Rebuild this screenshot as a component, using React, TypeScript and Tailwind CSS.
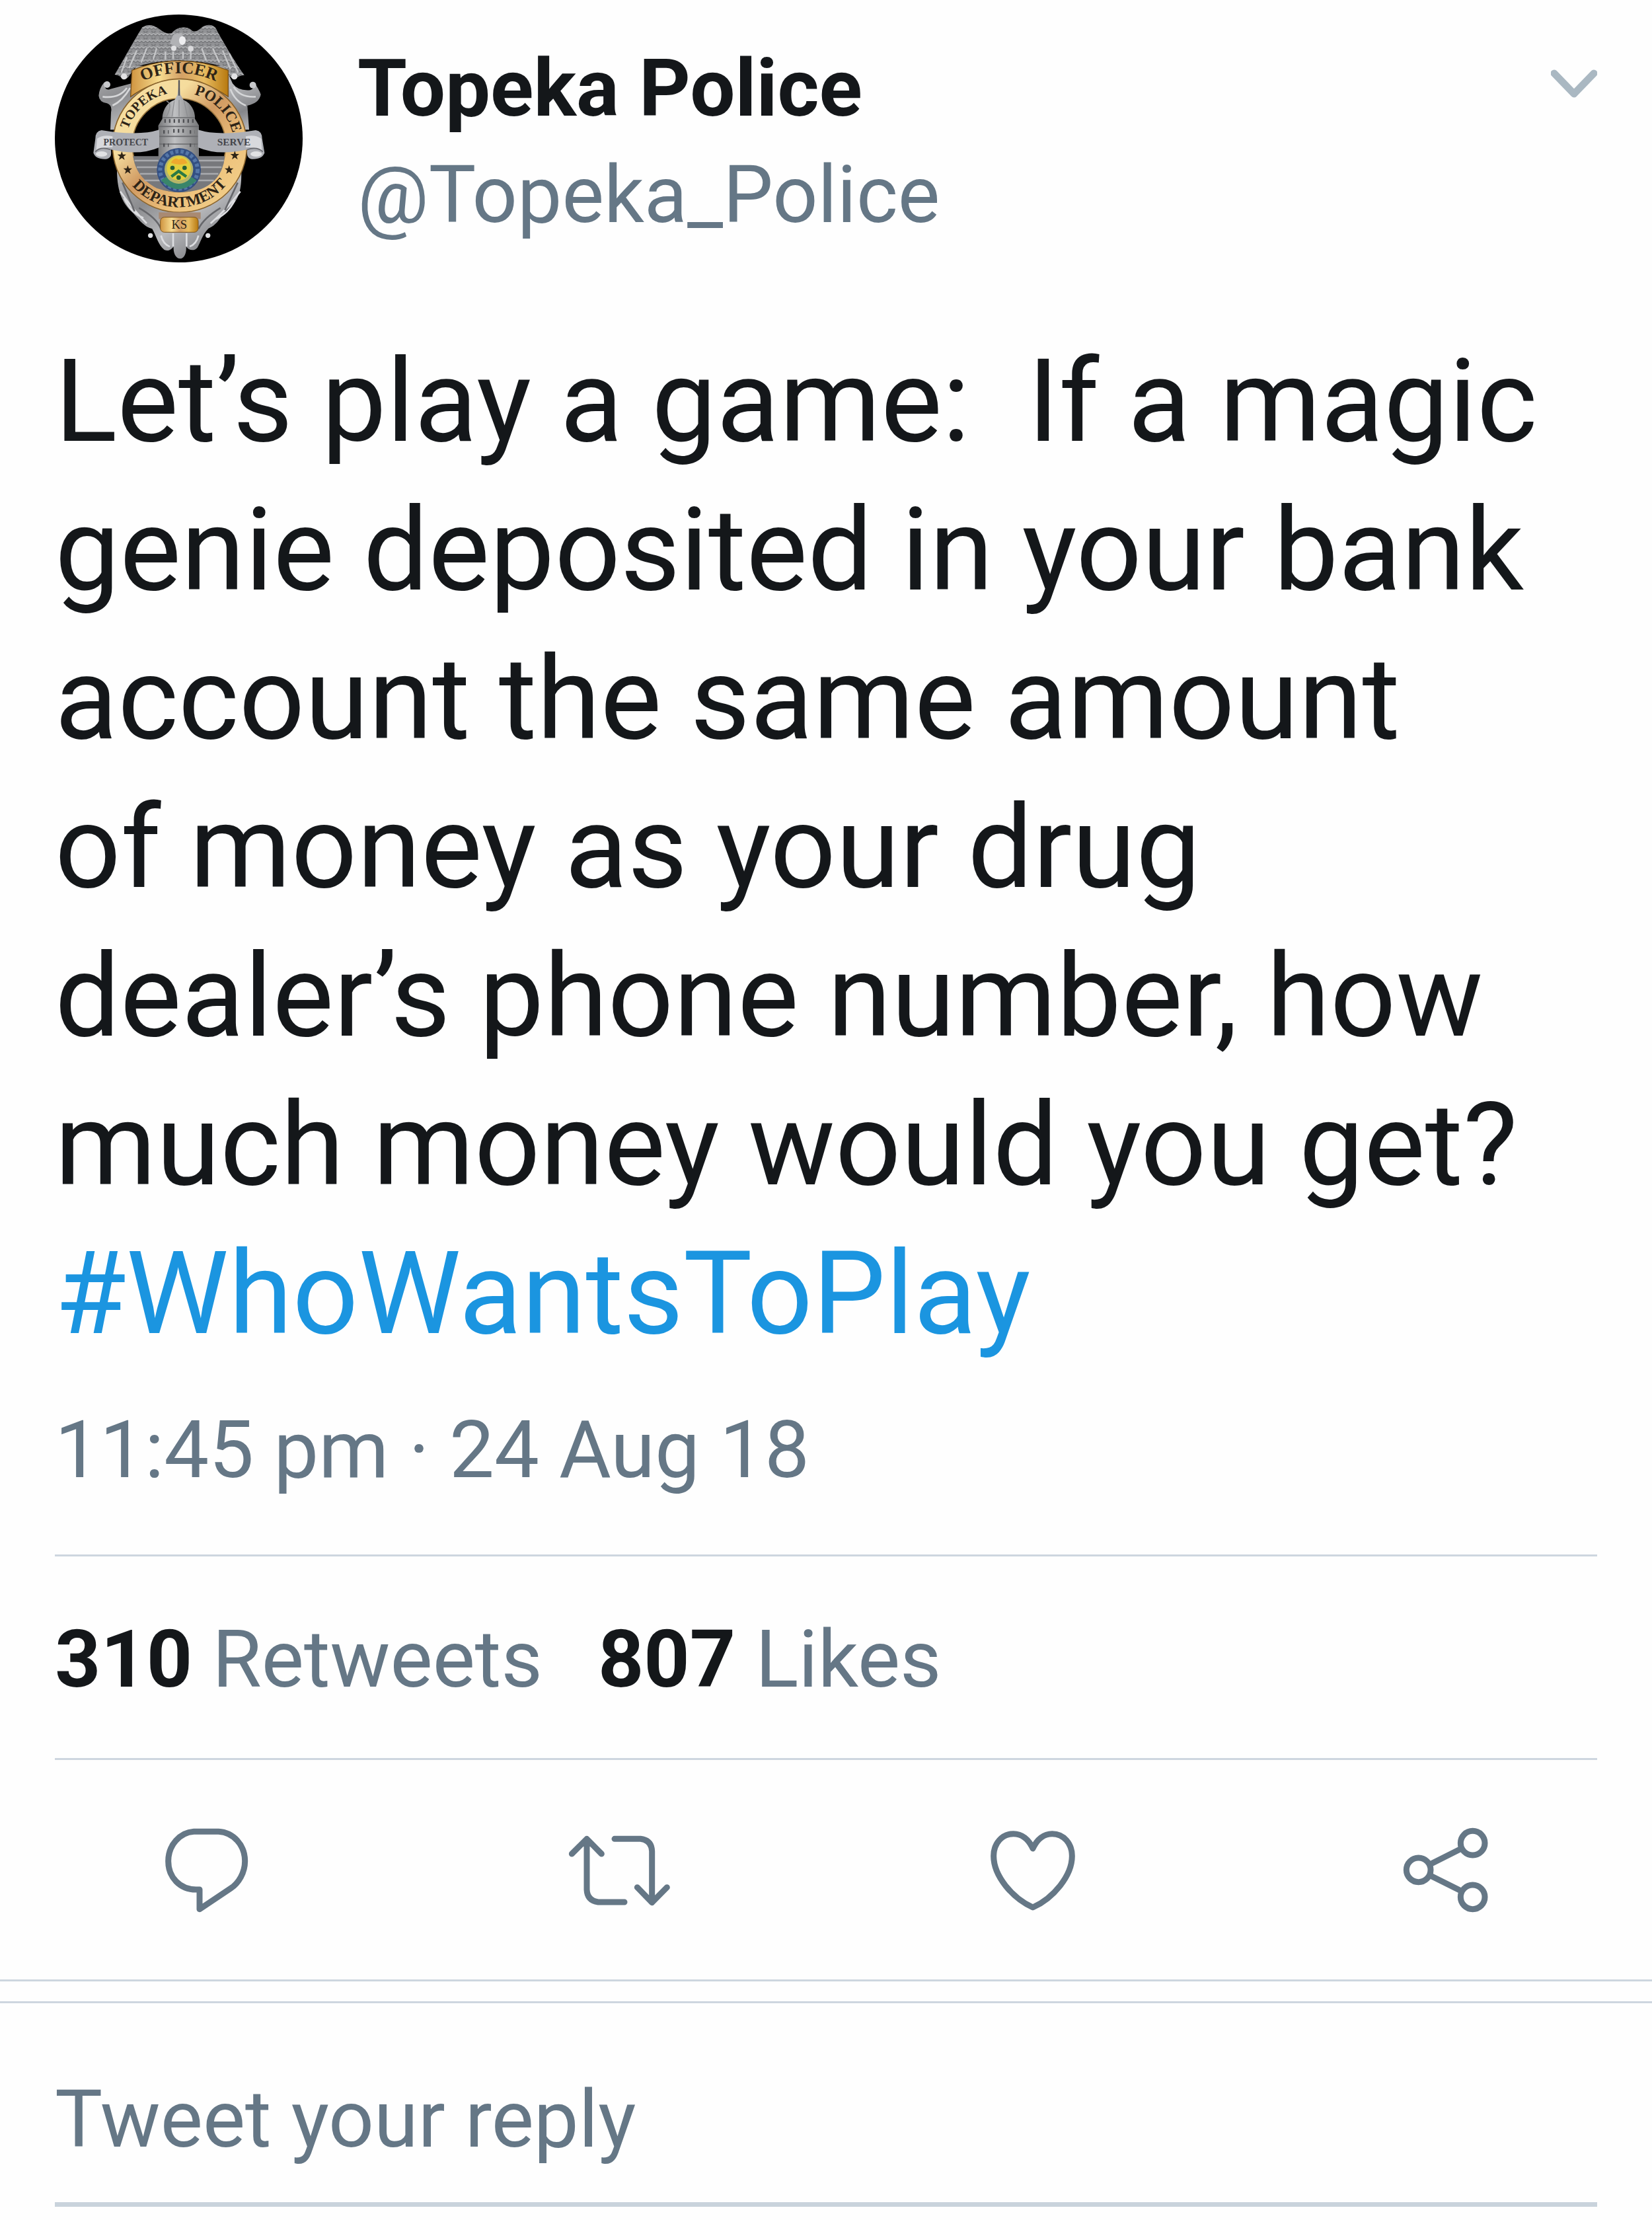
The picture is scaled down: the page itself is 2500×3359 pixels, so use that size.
import React from 'react';

const TWEET = [
  'Let’s play a game:  If a magic',
  'genie deposited in your bank',
  'account the same amount',
  'of money as your drug',
  'dealer’s phone number, how',
  'much money would you get?',
].join('\n');

function Star({ x, y }: { x: number; y: number }) {
  return (
    <path
      transform={`translate(${x} ${y})`}
      d="M0-21 5-7 20-7 8 3 13 18 0 9-13 18-8 3-20-7-5-7Z"
      fill="#2e2417"
    />
  );
}

function ArcText({ path, size, children }: { path: string; size: number; children: string }) {
  return (
    <text fontSize={size} textAnchor="middle">
      <textPath href={path} startOffset="50%">{children}</textPath>
    </text>
  );
}

function Badge() {
  return (
    <svg viewBox="38 37 1125 1125" className="size-full" role="img" aria-label="Topeka Police badge">
      <defs>
        <linearGradient id="silver" x1="0" y1="0" x2="1" y2="1">
          <stop offset="0" stopColor="#b4b4b6" />
          <stop offset="0.3" stopColor="#8b8c8f" />
          <stop offset="0.55" stopColor="#b9babd" />
          <stop offset="0.8" stopColor="#85868a" />
          <stop offset="1" stopColor="#c4c5c8" />
        </linearGradient>
        <linearGradient id="gold" x1="0" y1="0" x2="1" y2="1">
          <stop offset="0" stopColor="#f6dfa4" />
          <stop offset="0.3" stopColor="#f5dc9d" />
          <stop offset="0.48" stopColor="#d09a62" />
          <stop offset="0.7" stopColor="#eec27c" />
          <stop offset="1" stopColor="#f3d48f" />
        </linearGradient>
        <linearGradient id="banner" x1="0" y1="0" x2="1" y2="0">
          <stop offset="0" stopColor="#cf9440" />
          <stop offset="0.3" stopColor="#f7dc8f" />
          <stop offset="0.52" stopColor="#d3a066" />
          <stop offset="0.75" stopColor="#e8bd62" />
          <stop offset="1" stopColor="#b8790f" />
        </linearGradient>
        <linearGradient id="dome" x1="0" y1="0" x2="1" y2="0">
          <stop offset="0" stopColor="#77787a" />
          <stop offset="0.4" stopColor="#c0c1c3" />
          <stop offset="1" stopColor="#77787a" />
        </linearGradient>
        <pattern id="feathers" width="36" height="30" patternUnits="userSpaceOnUse">
          <path d="M0 6q9 16 18 0q9 16 18 0M9 21q9 16 18 0" fill="none" stroke="#6b6c6f" strokeWidth="4" />
          <path d="M0 1q9 16 18 0q9 16 18 0" fill="none" stroke="#cfd0d2" strokeWidth="3" />
        </pattern>
        <path id="arc-officer" d="M414 350Q602 256 790 350" />
        <path id="arc-topeka" d="M371 556A240 240 0 0 1 548 397" />
        <path id="arc-police" d="M655 396A240 240 0 0 1 848 590" />
        <path id="arc-department" d="M372 792A280 280 0 0 0 836 784" />
      </defs>
      <rect x="38" y="37" width="1125" height="1125" fill="#000" />

      <path
        d="M320 740C320 850 350 900 395 940C425 975 445 1000 480 1010C500 1045 508 1085 535 1105C555 1115 570 1100 577 1090C575 1125 590 1145 606 1145C622 1145 637 1125 634 1090C645 1108 672 1112 685 1095C700 1070 705 1040 735 1008C785 990 800 930 840 905C885 865 885 800 885 740Z"
        fill="url(#silver)"
      />
      <path
        d="M335 840Q400 930 455 985M880 840Q810 930 745 985M352 870Q385 940 440 960M855 880Q825 940 770 965M575 1030V1090M636 1030V1090M520 1040Q530 1080 560 1090M690 1040Q680 1080 650 1090"
        fill="none" stroke="#dcdde0" strokeWidth="8"
      />
      <path d="M420 915Q500 960 520 1010M790 915Q715 960 690 1010M345 800L400 930M868 800L810 925" fill="none" stroke="#66676b" strokeWidth="8" />
      <circle cx="472" cy="1040" r="11" fill="#dedfe1" />
      <circle cx="733" cy="1040" r="11" fill="#dedfe1" />

      <path
        d="M405 270L385 350L290 375Q265 385 265 355Q275 340 285 345L262 345Q240 370 237 405Q240 435 275 440Q300 450 293 480L290 560H920L912 450Q965 440 973 400Q965 375 942 345Q950 370 925 380Q870 385 845 350L810 270Z"
        fill="url(#silver)"
      />
      <circle cx="275" cy="355" r="15" fill="#c8c9cc" />
      <circle cx="937" cy="357" r="15" fill="#c8c9cc" />
      <path d="M255 410Q330 420 365 370M300 450Q345 430 380 370M950 410Q880 415 850 365M905 450Q855 430 835 375" fill="none" stroke="#d5d6d8" strokeWidth="8" />

      <path
        d="M310 310C340 260 395 160 435 95C460 78 485 84 505 98C525 112 545 130 570 120C590 95 630 88 655 105C670 120 685 115 710 92C735 78 765 82 775 112C810 175 860 260 898 312C880 312 870 322 850 325C830 330 820 290 805 275Q600 215 405 275C385 290 375 335 350 330C335 320 330 312 310 310Z"
        fill="#929396"
      />
      <path
        d="M310 310C340 260 395 160 435 95C460 78 485 84 505 98C525 112 545 130 570 120C590 95 630 88 655 105C670 120 685 115 710 92C735 78 765 82 775 112C810 175 860 260 898 312C880 312 870 322 850 325C830 330 820 290 805 275Q600 215 405 275C385 290 375 335 350 330C335 320 330 312 310 310Z"
        fill="url(#feathers)"
      />
      <path d="M365 230L340 300M410 200L375 280M455 190L430 255M500 190L485 240M705 190L725 245M755 190L785 255M800 200L835 285M830 215L870 300M540 205V240M575 205V238M620 205V238M655 205V240" stroke="#c5c6c8" strokeWidth="7" />
      <path d="M575 130L612 120L632 160L600 185L560 170Z" fill="#b1b2b5" />
      <ellipse cx="617" cy="155" rx="15" ry="20" fill="#eeeef0" />
      <circle cx="578" cy="190" r="12" fill="#e2e2e4" />
      <circle cx="655" cy="192" r="13" fill="#dadadc" />
      <circle cx="352" cy="318" r="14" fill="#e2e2e4" />
      <circle cx="853" cy="318" r="14" fill="#e2e2e4" />

      <path d="M388 290Q600 205 825 290V410Q600 255 382 410Z" fill="url(#banner)" stroke="#7b531c" strokeWidth="4" />

      <ellipse cx="605" cy="632" rx="305" ry="303" fill="url(#gold)" stroke="#8a642d" strokeWidth="5" />
      <ellipse cx="602" cy="630" rx="212" ry="212" fill="#000" stroke="#9b7740" strokeWidth="5" />
      <path d="M393 680H810Q800 790 700 830Q600 860 500 825Q405 775 393 680Z" fill="#77787c" />
      <path d="M400 700H805M410 730H795M425 760H780M445 790H760" stroke="#a9aaae" strokeWidth="7" />

      <path d="M602 335L608 400L622 425C660 440 676 480 674 510L692 540V700H508V540L526 510C526 475 545 435 582 425L595 400Z" fill="url(#dome)" />
      <path d="M602 335V405" stroke="#55565a" strokeWidth="7" />
      <path d="M527 505H674M508 545H692M508 590H692M508 625H692" stroke="#68696c" strokeWidth="5" />
      <path d="M545 430Q575 440 545 500M580 430L570 500M602 425V500M625 430L640 500M645 440L660 500" fill="none" stroke="#8d8e91" strokeWidth="4" />
      <path d="M535 520H670M530 570H555M575 565H625M650 570H672M530 630H555M650 630H672" stroke="#4f5054" strokeWidth="16" strokeDasharray="7 14" />

      <path d="M512 560Q420 590 250 562Q222 566 222 600L213 665Q222 695 270 693Q300 690 292 650Q420 680 512 640Z" fill="#aeb0b6" />
      <path d="M688 560Q780 590 950 562Q979 566 979 600L990 665Q980 695 932 693Q905 690 912 650Q780 680 688 640Z" fill="#aeb0b6" />
      <path d="M230 600Q260 580 300 590V640Q250 635 225 660ZM975 600Q945 580 905 590V640Q950 635 978 660Z" fill="#d8d9dd" />
      <path d="M222 660Q245 635 290 650M982 660Q955 635 912 650" fill="none" stroke="#68696e" strokeWidth="5" />
      <ellipse cx="250" cy="670" rx="26" ry="12" fill="#e1e2e4" />
      <ellipse cx="952" cy="670" rx="26" ry="12" fill="#e1e2e4" />

      <circle cx="601" cy="743" r="100" fill="#334f82" />
      <circle cx="601" cy="743" r="85" fill="none" stroke="#5577a8" strokeWidth="18" strokeDasharray="14 10" />
      <path d="M520 790Q600 870 682 790L660 775H540Z" fill="#39856a" />
      <circle cx="601" cy="740" r="65" fill="#b5b56a" />
      <circle cx="601" cy="735" r="55" fill="#e2cf3d" />
      <path d="M565 710Q580 680 601 695Q625 680 640 712Q600 725 565 710Z" fill="#efa92e" />
      <path d="M567 773L600 748L635 773" fill="none" stroke="#2b7a45" strokeWidth="13" />
      <circle cx="572" cy="733" r="10" fill="#285f34" />
      <circle cx="627" cy="733" r="10" fill="#285f34" />
      <circle cx="600" cy="777" r="10" fill="#285f34" />

      <Star x={342} y={679} />
      <Star x={369} y={742} />
      <Star x={855} y={677} />
      <Star x={829} y={742} />

      <rect x="510" y="935" width="190" height="30" fill="#a98a72" />
      <rect x="517" y="957" width="172" height="68" rx="18" fill="url(#banner)" stroke="#7b531c" strokeWidth="3" />

      <g fill="#2e2417" className="font-['Liberation_Serif',serif] font-bold">
        <ArcText path="#arc-officer" size={76}>OFFICER</ArcText>
        <ArcText path="#arc-topeka" size={60}>TOPEKA</ArcText>
        <ArcText path="#arc-police" size={68}>POLICE</ArcText>
        <ArcText path="#arc-department" size={70}>DEPARTMENT</ArcText>
        <text x="603" y="1010" fontSize="56" textAnchor="middle" className="font-normal">KS</text>
        <g fill="#44454b">
          <text x="360" y="630" fontSize="42" textAnchor="middle">PROTECT</text>
          <text x="851" y="630" fontSize="46" textAnchor="middle">SERVE</text>
        </g>
      </g>
    </svg>
  );
}

function ActionButton({ label, viewBox, children }: { label: string; viewBox: string; children: React.ReactNode }) {
  return (
    <button type="button" aria-label={label} className="flex justify-center">
      <svg viewBox={viewBox} className="size-[180px]" fill="none" stroke="currentColor" strokeWidth="27" strokeLinecap="round" strokeLinejoin="round" aria-hidden="true">
        {children}
      </svg>
    </button>
  );
}

export default function App() {
  return (
    <main className="w-full bg-[#fefefe] pb-5 font-[Roboto,sans-serif] text-[121px] leading-[160px] text-[#657786]">
      <article>
        <header className="flex items-start px-[83px] pt-[22px]">
          <div className="size-[375px] shrink-0 overflow-hidden rounded-full">
            <Badge />
          </div>
          <div className="ml-[83px] grow pt-8 leading-[161px]">
            <h1 className="font-bold text-[#14171a]">Topeka Police</h1>
            <a href="#profile" className="block text-[120px]">@Topeka_Police</a>
          </div>
          <button type="button" aria-label="More options" className="mt-[78px] text-[#aab8c2]">
            <svg viewBox="0 0 70 50" className="h-[50px] w-[70px]" fill="none" stroke="currentColor" strokeWidth="11" strokeLinecap="round" strokeLinejoin="round" aria-hidden="true">
              <path d="M5 11 35 42 65 11" />
            </svg>
          </button>
        </header>

        <div className="px-[83px]">
          <p className="mt-[98px] whitespace-pre-wrap text-[175px] leading-[225px] text-[#14171a]">
            {TWEET}
            {'\n'}
            <a href="#hashtag" className="text-[#1b95e0]">#WhoWantsToPlay</a>
          </p>
          <p className="mt-11">
            <time dateTime="2018-08-24T23:45">11:45 pm · 24 Aug 18</time>
          </p>
          <div className="mt-[78px] flex gap-[84px] border-y-3 border-[#cdd6df] pt-[76px] pb-[69px]">
            <a href="#retweets"><strong className="font-bold text-[#14171a]">310</strong> Retweets</a>
            <a href="#likes"><strong className="font-bold text-[#14171a]">807</strong> Likes</a>
          </div>
        </div>

        <div className="grid grid-cols-4 border-b-3 border-[#cdd6df] pt-[77px] pb-[75px]">
          <ActionButton label="Reply" viewBox="7 0 540 540">
            <path d="M218 94H330C398 98 450 155 450 228C450 280 422 327 385 352L244 446V357H228C155 357 102 302 102 228C102 155 155 98 218 94Z" />
          </ActionButton>
          <ActionButton label="Retweet" viewBox="24 0 540 540">
            <path d="M76 195 144 127 211 195M144 130V357Q146 407 196 414H315M270 127H388Q438 133 440 183V410M373 347 440 416 508 347" />
          </ActionButton>
          <ActionButton label="Like" viewBox="-22 0 540 540">
            <path d="M248 171C229 129 198 104 160 104C108 104 70 148 70 205C70 295 155 396 248 438C341 396 426 295 426 205C426 148 388 104 336 104C298 104 267 129 248 171Z" />
          </ActionButton>
          <ActionButton label="Share" viewBox="-7 0 540 540">
            <circle cx="139" cy="268" r="55" />
            <circle cx="385" cy="146" r="55" />
            <circle cx="385" cy="391" r="55" />
            <path d="M192 242 332 172M192 293 332 363" />
          </ActionButton>
        </div>
      </article>

      <form className="mt-[30px] border-t-3 border-[#cdd6df] px-[83px] pt-[96px]">
        <input
          type="text"
          aria-label="Tweet your reply"
          placeholder="Tweet your reply"
          className="block h-[212px] w-full border-b-7 border-[#c9d3dc] pb-[45px] outline-none placeholder:text-[#657786] placeholder:opacity-100"
        />
      </form>
    </main>
  );
}
